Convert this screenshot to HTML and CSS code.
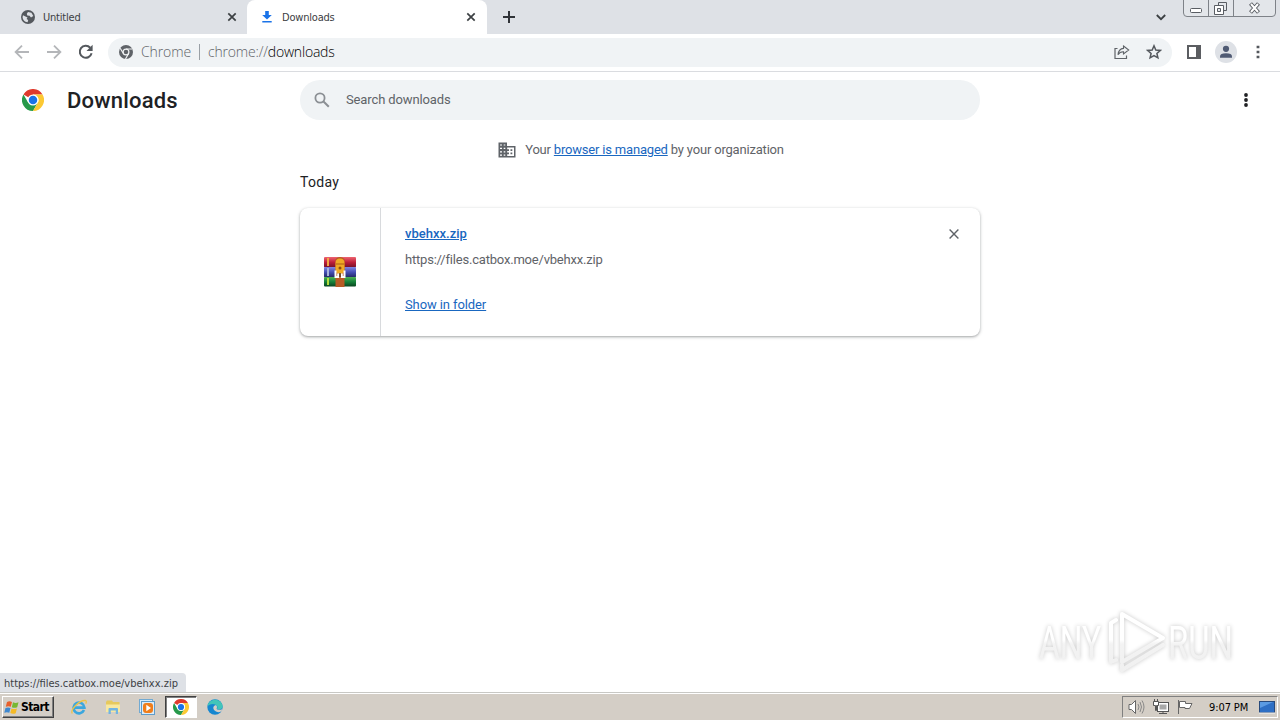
FILE: index.html
```html
<!DOCTYPE html>
<html lang="en">
<head>
    <meta charset="UTF-8">
    <meta name="viewport" content="width=device-width, initial-scale=1.0">
    <title>Downloads</title>
    <link rel="stylesheet" href="styles.css">
</head>
<body>
<!-- shared logo -->
<svg class="defs" width="0" height="0">
  <symbol id="chrome" viewBox="0 0 48 48">
    <circle cx="24" cy="24" r="24" fill="#fff"/>
    <path d="M24 24 L3.2 12 A24 24 0 0 1 44.8 12 L24 12 Z" fill="#df3a2d"/>
    <path d="M3.2 12 A24 24 0 0 0 24 48 L34.4 30 L24 24 L13.6 30 Z" fill="#27994a"/>
    <path d="M44.8 12 A24 24 0 0 1 24 48 L34.4 30 A12 12 0 0 0 24 12 Z" fill="#fcc934"/>
    <circle cx="24" cy="24" r="12" fill="#fff"/>
    <circle cx="24" cy="24" r="9.3" fill="#1a73e8"/>
  </symbol>
</svg>

<div class="tabs">
  <div class="tab">
    <svg class="favicon" width="14" height="14" viewBox="0 0 14 14"><circle cx="7" cy="7" r="7" fill="#54585d"/><path d="M2 5.2 L6.5 7.4 L5.6 9 L7.2 10 L6.6 12.3 C3.6 12 1.6 9.5 1.6 7 Z M7 2 L10.4 2.7 L12.3 6 L10 7.4 L8.6 5.8 L6.3 5.5 L5.8 3.7 Z" fill="#dee1e6"/></svg>
    <span class="tab-title">Untitled</span>
    <svg class="tab-close" width="10" height="10" viewBox="0 0 10 10"><path d="M1.3 1.3 L8.7 8.7 M8.7 1.3 L1.3 8.7" stroke="#3c4043" stroke-width="1.7"/></svg>
  </div>
  <div class="tab active">
    <svg class="favicon" width="14" height="14" viewBox="0 0 14 14"><path d="M5.2 1 H8.8 V5 H11.8 L7 9.6 L2.2 5 H5.2 Z M2.3 10.9 H11.7 V12.4 H2.3 Z" fill="#1a73e8"/></svg>
    <span class="tab-title">Downloads</span>
    <svg class="tab-close" width="10" height="10" viewBox="0 0 10 10"><path d="M1.3 1.3 L8.7 8.7 M8.7 1.3 L1.3 8.7" stroke="#3c4043" stroke-width="1.7"/></svg>
  </div>
  <svg class="new-tab" width="12" height="12" viewBox="0 0 12 12"><path d="M6 0 V12 M0 6 H12" stroke="#303338" stroke-width="2"/></svg>
  <svg class="tab-search" width="10" height="7" viewBox="0 0 10 7"><path d="M.8 1 L5 5.2 L9.2 1" fill="none" stroke="#3c4043" stroke-width="1.8"/></svg>
  <svg class="win-buttons" width="94" height="18" viewBox="0 0 94 18">
    <path d="M.5 0 V13 Q.5 16.5 4 16.5 H89 Q92.5 16.5 92.5 13 V0 M25.5 0 V16 M50.5 0 V16" fill="#e3e6ea" stroke="#7e8288"/>
    <rect x="7.5" y="8.5" width="11" height="4" rx="1" fill="#fff" stroke="#595d63"/>
    <path d="M35.5 5 V2.5 H43.5 V10.5 H41" fill="none" stroke="#595d63"/>
    <path d="M31.5 5.5 H40.5 V14.5 H31.5 Z M34.5 8.5 H37.5 V11.5 H34.5 Z" fill="#fff" fill-rule="evenodd" stroke="#595d63"/>
    <path d="M67.5 3.5 L75.5 12.5 M75.5 3.5 L67.5 12.5" stroke="#595d63" stroke-width="4"/>
    <path d="M68 4 L75 12 M75 4 L68 12" stroke="#fff" stroke-width="2"/>
  </svg>
</div>

<div class="toolbar">
  <svg width="16" height="16" viewBox="0 0 16 16"><path d="M15 8 H2 M8 1.6 L1.6 8 L8 14.4" fill="none" stroke="#b4b6b9" stroke-width="1.8"/></svg>
  <svg width="16" height="16" viewBox="0 0 16 16"><path d="M1 8 H14 M8 1.6 L14.4 8 L8 14.4" fill="none" stroke="#b4b6b9" stroke-width="1.8"/></svg>
  <svg width="16" height="16" viewBox="0 0 16 16"><path d="M13.6 9.3 A6 6 0 1 1 12.2 3.7" fill="none" stroke="#54585d" stroke-width="2"/><path d="M14.6 .8 V6.9 H8.5 Z" fill="#54585d"/></svg>
  <div class="omnibox">
    <svg width="14" height="14" viewBox="0 0 14 14"><circle cx="7" cy="7" r="7" fill="#5f6368"/><circle cx="7" cy="7" r="2.9" fill="none" stroke="#f1f3f4" stroke-width="1.2"/><path d="M7 4 H13.3 M4.4 8.5 L1.2 3.2 M9.6 8.5 L6.5 14" stroke="#f1f3f4" stroke-width="1.2"/></svg>
    <span class="scheme">Chrome</span>
    <span class="divider"></span>
    <span class="url">chrome://<b>downloads</b></span>
    <svg class="share" width="16" height="16" viewBox="0 0 16 16"><path d="M3.5 4.5 H1 V14.5 H12.5 V11.5" fill="none" stroke="#5f6368" stroke-width="1.2"/><path d="M9.5 2 L14.7 6 L9.5 10 V7.7 Q6 7.5 4 10.7 Q4.6 4.8 9.5 4.4 Z" fill="none" stroke="#5f6368" stroke-width="1.1"/></svg>
    <svg class="star" width="16" height="16" viewBox="0 0 16 16"><path d="M8 1.8 L9.8 6 L14.3 6.4 L10.9 9.4 L11.9 13.8 L8 11.5 L4.1 13.8 L5.1 9.4 L1.7 6.4 L6.2 6 Z" fill="none" stroke="#54585d" stroke-width="1.5"/></svg>
  </div>
  <svg class="panel" width="14" height="14" viewBox="0 0 14 14"><path d="M0 0 H14 V14 H0 Z M2 2 V12 H9 V2 Z" fill="#5b5d61" fill-rule="evenodd"/></svg>
  <svg class="avatar" width="22" height="22" viewBox="0 0 22 22"><circle cx="11" cy="11" r="11" fill="#dee1e6"/><circle cx="11" cy="7.8" r="3.1" fill="#4f5a73"/><path d="M5 16.8 V15.4 Q5 12.2 11 12.2 Q17 12.2 17 15.4 V16.8 Z" fill="#4f5a73"/></svg>
  <svg class="menu" width="4" height="14" viewBox="0 0 4 14"><path d="M.6 .7 H3.4 V3.3 H.6 Z M.6 5.7 H3.4 V8.3 H.6 Z M.6 10.7 H3.4 V13.3 H.6 Z" fill="#54585d"/></svg>
</div>

<div class="header">
  <svg class="logo" width="22" height="22"><use href="#chrome"/></svg>
  <h1>Downloads</h1>
  <div class="search">
    <svg width="16" height="16" viewBox="0 0 16 16"><circle cx="6" cy="6" r="4.6" fill="none" stroke="#8b8f94" stroke-width="1.8"/><path d="M9.5 9.5 L14.8 14.8" stroke="#8b8f94" stroke-width="2"/></svg>
    <span>Search downloads</span>
  </div>
  <svg class="more" width="4" height="14" viewBox="0 0 4 14"><circle cx="2" cy="2" r="1.9" fill="#202124"/><circle cx="2" cy="7" r="1.9" fill="#202124"/><circle cx="2" cy="12" r="1.9" fill="#202124"/></svg>
</div>

<div class="content">
  <div class="managed">
    <svg width="18" height="16" viewBox="0 0 18 16"><path d="M.5 .5 H9 V4 H17.5 V15.5 H.5 Z" fill="#5f6368"/><path d="M2 2.4 H4 V3.6 H2 Z M5.7 2.4 H7.3 V3.6 H5.7 Z M2 5.8 H4 V7 H2 Z M5.7 5.8 H7.3 V7 H5.7 Z M2 9.2 H4 V10.4 H2 Z M5.7 9.2 H7.3 V10.4 H5.7 Z M2 12.6 H4 V13.8 H2 Z M5.7 12.6 H7.3 V13.8 H5.7 Z M9.2 5.6 H16 V14 H9.2 V12.3 H11 V10.6 H9.2 V9 H11 V7.3 H9.2 Z" fill="#fff"/><path d="M12.5 7.3 H14.3 V9 H12.5 Z M12.5 10.6 H14.3 V12.3 H12.5 Z" fill="#5f6368"/></svg>
    <span>Your <a>browser is managed</a> by your organization</span>
  </div>
  <h3>Today</h3>
  <div class="card">
    <div class="file-icon">
      <svg width="32" height="32" viewBox="0 0 32 32">
        <defs>
          <linearGradient id="red" x2="0" y2="1"><stop stop-color="#ef6570"/><stop offset=".5" stop-color="#bd1f3b"/><stop offset="1" stop-color="#741128"/></linearGradient>
          <linearGradient id="blue" x2="0" y2="1"><stop stop-color="#8288e5"/><stop offset=".5" stop-color="#444eb4"/><stop offset="1" stop-color="#232761"/></linearGradient>
          <linearGradient id="green" x2="0" y2="1"><stop stop-color="#4fb254"/><stop offset=".5" stop-color="#16823a"/><stop offset="1" stop-color="#0a4520"/></linearGradient>
        </defs>
        <rect x="0" y="1" width="32" height="10.5" rx="1" fill="url(#red)"/>
        <rect x="0" y="11" width="32" height="10.5" rx="1" fill="url(#blue)"/>
        <rect x="0" y="21" width="32" height="9.5" rx="1" fill="url(#green)"/>
        <path d="M4 2 V10" stroke="#f2a544" stroke-width="2"/><path d="M4 12 V20" stroke="#a8b4dc" stroke-width="2"/><path d="M4 22 V29" stroke="#b5dc3e" stroke-width="2"/>
        <path d="M11.5 3 Q16 -1 20.5 3 V31 H11.5 Z" fill="#b75b25"/>
        <path d="M11.5 7 Q11.5 2.5 16 2.5 Q20.5 2.5 20.5 7 V13 Q20.5 18 16 18 Q11.5 18 11.5 13 Z" fill="#efaa26"/>
        <path d="M12 8 H20.5" stroke="#b86a18" stroke-width="1.2"/><circle cx="16" cy="12" r="1.5" fill="#8f4a10"/>
        <path d="M11.5 14.5 V21 H14.2 V17.5 M17.8 17.5 V21 H20.5 V14.5" fill="none" stroke="#fff" stroke-width="2"/>
        <path d="M16 17 V21" stroke="#4a3828" stroke-width="1.4"/>
      </svg>
    </div>
    <div class="details">
      <a class="name">vbehxx.zip</a>
      <span class="source">https://files.catbox.moe/vbehxx.zip</span>
      <a class="show">Show in folder</a>
    </div>
    <svg class="remove" width="10" height="10" viewBox="0 0 10 10"><path d="M.6 .6 L9.4 9.4 M9.4 .6 L.6 9.4" stroke="#5f6368" stroke-width="1.4"/></svg>
  </div>
</div>

<svg class="watermark" width="220" height="76" viewBox="0 0 220 76">
  <defs>
    <linearGradient id="shade" gradientUnits="userSpaceOnUse" x1="0" y1="8" x2="0" y2="68"><stop offset=".48" stop-color="#fff"/><stop offset=".55" stop-color="#f3f3f3"/><stop offset="1" stop-color="#f0f0f0"/></linearGradient>
  </defs>
  <g font-family="Roboto, sans-serif" font-size="46" fill="url(#shade)">
    <text x="7" y="56" textLength="62" lengthAdjust="spacingAndGlyphs">ANY</text>
    <text x="136" y="56" textLength="65" lengthAdjust="spacingAndGlyphs">RUN</text>
  </g>
  <g fill="none" stroke="url(#shade)" stroke-width="4" stroke-linejoin="round" stroke-linecap="round">
    <path d="M90 11 L131 35 L90 59 Z"/>
    <path d="M84 17 L79 20 V59 L84 57 M90 67 L131 42 M90 67 V62"/>
  </g>
</svg>
<div class="status">https://files.catbox.moe/vbehxx.zip</div>

<div class="taskbar">
  <div class="start">
    <svg width="16" height="15" viewBox="0 0 16 15"><path d="M3 2 Q5.5 .5 8 2 L6.8 6.8 Q4.5 5.5 1.8 6.8 Z" fill="#e8602c"/><path d="M9 2.3 Q11.5 3.8 14.5 2.3 L13.2 7.2 Q10.5 8.5 7.8 7.2 Z" fill="#78b832"/><path d="M1.5 8 Q4.2 6.8 6.5 8.1 L5.3 12.8 Q3 11.6 .3 12.8 Z" fill="#3e88d0"/><path d="M7.5 8.4 Q10.2 9.8 12.9 8.4 L11.7 13.2 Q9 14.5 6.3 13.1 Z" fill="#f5ba25"/></svg>
    <b>Start</b>
  </div>
  <div class="launch">
    <svg width="16" height="16" viewBox="0 0 16 16"><path d="M13 11 A5.4 5.4 0 1 1 13.4 8.6 H4" fill="none" stroke="#3ba7de" stroke-width="2.6"/><path d="M1.3 14.5 C-1 11 8 1 14.5 1.5 Q16 2 14.7 4.6" fill="none" stroke="#edc347" stroke-width="1.3"/></svg>
  </div>
  <div class="launch">
    <svg width="16" height="16" viewBox="0 0 16 16"><path d="M1 3 L2 1.5 H7 L8 3 H14.5 V13 H1 Z" fill="#e6c95d"/><path d="M1 5.5 H15 V13 H1 Z" fill="#f8e8a0"/><path d="M3.5 15 V10 Q3.5 9 4.5 9 H12 Q13 9 13 10 V15 H10.8 V11.5 H5.8 V15 Z" fill="#72b5e2"/></svg>
  </div>
  <div class="launch">
    <svg width="16" height="16" viewBox="0 0 16 16"><rect x=".5" y=".5" width="13" height="13" fill="#d8ecfa" stroke="#72aad2"/><rect x="2.5" y="2.5" width="13" height="13" fill="#dcecf8" stroke="#5e9cca"/><rect x="4" y="4" width="10" height="10" rx="3" fill="#f07e1b"/><path d="M7.3 5.8 L12 9 L7.3 12.2 Z" fill="#fff"/></svg>
  </div>
  <div class="launch pressed">
    <svg width="16" height="16"><use href="#chrome"/></svg>
  </div>
  <div class="launch">
    <svg width="16" height="16" viewBox="0 0 16 16"><circle cx="8" cy="8" r="7.7" fill="#1687d0"/><path d="M.5 7 C2 -1.5 14.5 -1.5 15.7 7.3 C15.8 10 12 11 10 10 Q11.3 7.3 9 6 Q5 3.8 .5 7 Z" fill="#42c5b9"/><path d="M9 6 Q4.8 7.3 7 11 Q10 14.5 14.5 12.3 L15.5 10 Q12 11.7 9.6 10 Q10.8 7.5 9 6 Z" fill="#d5cfc7"/></svg>
  </div>
  <div class="tray">
    <svg width="17" height="16" viewBox="0 0 17 16"><path d="M1 5.5 H3.5 L7.5 1.5 V14.5 L3.5 10.5 H1 Z" fill="#fff" stroke="#666"/><path d="M10 5 Q12 8 10 11 M12 3 Q15 8 12 13 M14 1.5 Q18 8 14 14.5" fill="none" stroke="#888"/></svg>
    <svg width="16" height="16" viewBox="0 0 16 16"><rect x="4.5" y="3.5" width="11" height="9" fill="#fff" stroke="#555"/><rect x="6.5" y="5.5" width="7" height="5" fill="#a8a8a8"/><path d="M6 14.5 H14 M10 13 V14" stroke="#555"/><path d="M.5 2.5 H5.5 V6.5 H3.5 V11.5 H2.5 V6.5 H.5 Z M1.5 0 V2 M4.5 0 V2" fill="#fff" stroke="#555"/></svg>
    <svg width="16" height="16" viewBox="0 0 16 16"><path d="M1.5 1 V15" stroke="#666"/><path d="M2.5 2.5 H8.5 V4.5 H15 L12.5 9.5 H8 V8.5 H2.5 Z" fill="#fff" stroke="#666"/></svg>
    <span class="clock">9:07 PM</span>
    <svg class="desktop" width="16" height="13" viewBox="0 0 16 13"><rect x=".5" y=".5" width="15" height="11" fill="#2e6fc4" stroke="#274a7c"/><path d="M1 1 H14 L1 7 Z" fill="#5b9be2"/><path d="M0 12 H16" stroke="#f2f5f8"/></svg>
  </div>
</div>
</body>
</html>
```
FILE: styles.css
```css
body {
  display: flex;
  flex-direction: column;
  height: 720px;
  margin: 0;
  overflow: hidden;
  background: #fff;
  font-family: Roboto, Arial, sans-serif;
  font-size: 13px;
  color: #5f6368;
}
svg { display: block; flex: none; }
.defs { position: absolute; }

/* Tab strip */
.tabs {
  display: flex;
  height: 34px;
  flex: none;
  align-items: center;
  background: #dee1e6;
  font-family: "DejaVu Sans Condensed", Tahoma, sans-serif;
  font-size: 11px;
  color: #3c4043;
}
.tab {
  display: flex;
  align-items: center;
  box-sizing: border-box;
  width: 247px;
  height: 34px;
  padding: 0 10px 0 21px;
  border-radius: 0 0 8px 0;
}
.tab.active {
  width: 240px;
  padding: 0 11px 0 13px;
  background: #fff;
  border-radius: 8px 8px 0 0;
}
.tab-title { margin-left: 8px; letter-spacing: -0.2px; }
.tab-close { margin-left: auto; }
.new-tab { margin-left: 16px; }
.tab-search { margin-left: auto; }
.win-buttons { align-self: flex-start; margin: 0 3px 0 17px; }

/* Address bar */
.toolbar {
  display: flex;
  align-items: center;
  gap: 16px;
  flex: none;
  box-sizing: border-box;
  height: 38px;
  padding: 0 20px 1px 14px;
  border-bottom: 1px solid #dadce0;
}
.omnibox {
  display: flex;
  align-items: center;
  box-sizing: border-box;
  flex: 1;
  height: 29px;
  margin-left: -2px;
  padding: 0 10px 0 11px;
  border-radius: 15px;
  background: #f0f3f5;
  font-family: "Open Sans", sans-serif;
  font-size: 14px;
  font-weight: 300;
  line-height: 20px;
}
.scheme { margin-left: 8px; letter-spacing: -0.1px; }
.divider { width: 1px; height: 16px; margin: 0 8px; background: #9aa0a6; }
.url { letter-spacing: -0.2px; }
.url b { font-weight: 300; color: #000; }
.share { margin-left: auto; }
.star { margin-left: 16px; }
.panel { margin-left: -1px; }
.avatar { margin-left: -2px; }
.menu { margin-left: 3px; }

/* Page header */
.header {
  display: flex;
  align-items: center;
  flex: none;
  height: 56px;
  padding-left: 22px;
  padding-right: 32px;
}
.header h1 {
  width: 233px;
  margin: 0 0 0 23px;
  font-size: 22px;
  font-weight: 500;
  letter-spacing: 0.2px;
  color: #202124;
}
.search {
  display: flex;
  align-items: center;
  gap: 16px;
  box-sizing: border-box;
  width: 680px;
  height: 40px;
  padding-left: 14px;
  border-radius: 20px;
  background: #f0f3f5;
  letter-spacing: -0.12px;
}
.search span { padding-bottom: 2px; }
.more { margin-left: auto; }

/* Download list */
.content { flex: 1; width: 680px; margin: 0 auto; }
.content a { color: #1967c0; text-decoration: underline; }
.managed {
  display: flex;
  align-items: center;
  justify-content: center;
  gap: 9px;
  height: 44px;
  padding-left: 2px;
  letter-spacing: -0.19px;
}
.managed span { padding-bottom: 2px; }
.content h3 {
  margin: 0;
  font-size: 14px;
  font-weight: normal;
  line-height: 20px;
  letter-spacing: 0.3px;
  color: #202124;
}
.card {
  display: flex;
  height: 128px;
  margin-top: 16px;
  border-radius: 8px;
  box-shadow: 0 1px 2px rgba(60, 64, 67, .3), 0 1px 3px 1px rgba(60, 64, 67, .15);
}
.file-icon {
  display: flex;
  align-items: center;
  justify-content: center;
  width: 80px;
  border-right: 1px solid #d8dadd;
}
.details {
  display: flex;
  flex-direction: column;
  align-items: flex-start;
  flex: 1;
  padding: 16px 24px;
  line-height: 20px;
}
.name { font-weight: 500; }
.source { margin-top: 6px; letter-spacing: -0.2px; }
.show { margin-top: 25px; letter-spacing: -0.1px; }
.remove { margin: 21px 21px 0 0; }

.watermark {
  position: absolute;
  left: 1032px;
  top: 603px;
  filter: drop-shadow(0 0 2px rgba(0, 0, 0, .22));
}

/* Link preview at the bottom */
.status {
  width: 186px;
  height: 19px;
  flex: none;
  box-sizing: border-box;
  padding-left: 4px;
  border-radius: 0 4px 0 0;
  background: #dee1e6;
  font-family: "DejaVu Sans Condensed", Tahoma, sans-serif;
  font-size: 11px;
  line-height: 21px;
  color: #3c4043;
  white-space: nowrap;
}

/* Taskbar */
.taskbar {
  display: flex;
  align-items: center;
  flex: none;
  box-sizing: border-box;
  height: 28px;
  padding: 1px 2px 0;
  border-top: 1px solid #c8c8c4;
  background: #d4cec6;
  box-shadow: inset 0 1px #fff;
  font-family: "DejaVu Sans Condensed", Tahoma, sans-serif;
  font-size: 11px;
  color: #000;
}
.start {
  display: flex;
  align-items: center;
  gap: 1px;
  box-sizing: border-box;
  width: 52px;
  height: 22px;
  margin-right: 9px;
  padding-left: 1px;
  border: 1px solid;
  border-color: #fff #404040 #404040 #fff;
  box-shadow: inset -1px -1px #808080;
}
.start b { font-size: 12px; letter-spacing: -0.6px; }
.launch {
  display: flex;
  align-items: center;
  justify-content: center;
  box-sizing: border-box;
  width: 32px;
  height: 22px;
  margin-right: 2px;
}
.pressed {
  background: #fff;
  border: 1px solid;
  border-color: #404040 #fff #fff #404040;
  box-shadow: inset 1px 1px #808080;
}
.tray {
  display: flex;
  align-items: center;
  gap: 8px;
  box-sizing: border-box;
  width: 156px;
  height: 22px;
  margin-left: auto;
  padding-left: 5px;
  border: 1px solid;
  border-color: #808080 #fff #fff #808080;
}
.clock { margin-left: 8px; letter-spacing: -0.1px; white-space: nowrap; }
.desktop { margin-left: 3px; }
```
